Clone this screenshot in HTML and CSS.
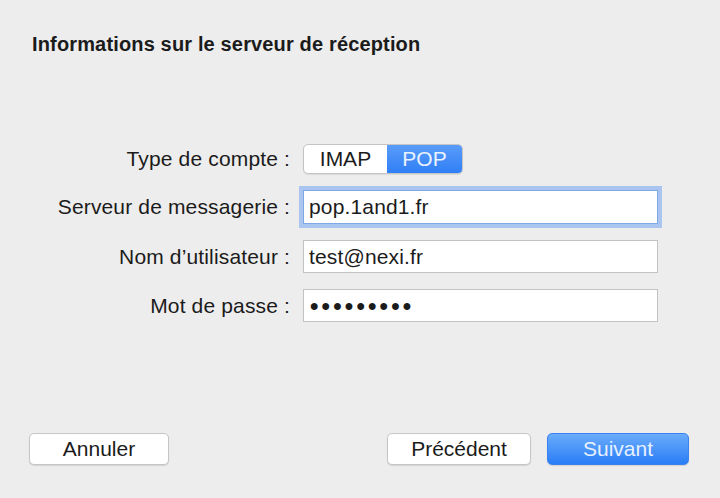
FILE: index.html
```html
<!DOCTYPE html>
<html>
<head><title>Compte</title><meta charset="UTF-8">
  <link rel="stylesheet" href="styles.css">
</head>
<body>
  <div class="dialog">
    <h1 class="titre">Informations sur le serveur de réception</h1>

    <div class="form">
      <span class="label">Type de compte :</span>
      <div class="segment">
        <span class="seg">IMAP</span>
        <span class="seg actif">POP</span>
      </div>

      <span class="label">Serveur de messagerie :</span>
      <div class="champ focus">pop.1and1.fr</div>

      <span class="label">Nom d’utilisateur :</span>
      <div class="champ">test@nexi.fr</div>

      <span class="label">Mot de passe :</span>
      <div class="champ"><span class="points">•••••••••</span></div>
    </div>

    <div class="pied">
      <button class="bouton annuler">Annuler</button>
      <button class="bouton precedent">Précédent</button>
      <button class="bouton suivant">Suivant</button>
    </div>
  </div>
</body>
</html>
```

FILE: styles.css
```css
html, body {
  margin: 0;
  background: #ededed;
}
.dialog {
  height: 498px;
  box-sizing: border-box;
  display: flex;
  flex-direction: column;
  padding: 33px 31px 33px 28px;
  font-family: "Liberation Sans", Arial, sans-serif;
  color: #1b1b1b;
}
.titre {
  margin: 0 0 0 4px;
  font-size: 20px;
  line-height: 22px;
  letter-spacing: 0.15px;
  font-weight: bold;
}
.form {
  margin-top: 89px;
  display: grid;
  grid-template-columns: 262px 355px;
  column-gap: 13px;
  row-gap: 16px;
  align-items: center;
}
.label {
  text-align: right;
  font-size: 21px;
  letter-spacing: 0.15px;
  white-space: nowrap;
}
.segment {
  display: flex;
  width: 160px;
  height: 30px;
  box-sizing: border-box;
  border: 1px solid #c4c4c4;
  border-radius: 5px;
  background: #fff;
  overflow: hidden;
  box-shadow: 0 1px 1px rgba(0,0,0,0.08);
}
.seg {
  display: flex;
  align-items: center;
  justify-content: center;
  font-size: 21px;
  width: 84px;
}
.seg.actif {
  width: 76px;
  background: linear-gradient(#5a9cf9, #2f7ff6);
  color: #eaf2ff;
}
.champ {
  height: 33px;
  box-sizing: border-box;
  border: 1px solid #c3c3c3;
  background: #fff;
  padding: 0 5px;
  display: flex;
  align-items: center;
  font-size: 21px;
  letter-spacing: 0.15px;
}
.champ.focus {
  height: 34px;
  border-color: #7ea9e6;
  box-shadow: 0 0 0 4px #a9c5f0;
}
.points {
  font-size: 24px;
  letter-spacing: 3.2px;
  font-weight: bold;
  margin-left: 1px;
}
.pied {
  margin-top: auto;
  display: flex;
  gap: 16px;
}
.bouton {
  height: 32px;
  box-sizing: border-box;
  border: 1px solid #c6c6c6;
  border-radius: 5px;
  background: #fff;
  font-family: inherit;
  font-size: 21px;
  color: #1b1b1b;
  box-shadow: 0 1px 1px rgba(0,0,0,0.12);
  padding: 0;
}
.annuler { width: 140px; margin-left: 1px; }
.precedent { width: 144px; margin-left: auto; }
.suivant {
  width: 142px;
  border-color: #3b82ef;
  background: linear-gradient(#6aacfa, #2a7df7);
  color: #e6f0ff;
}
```
